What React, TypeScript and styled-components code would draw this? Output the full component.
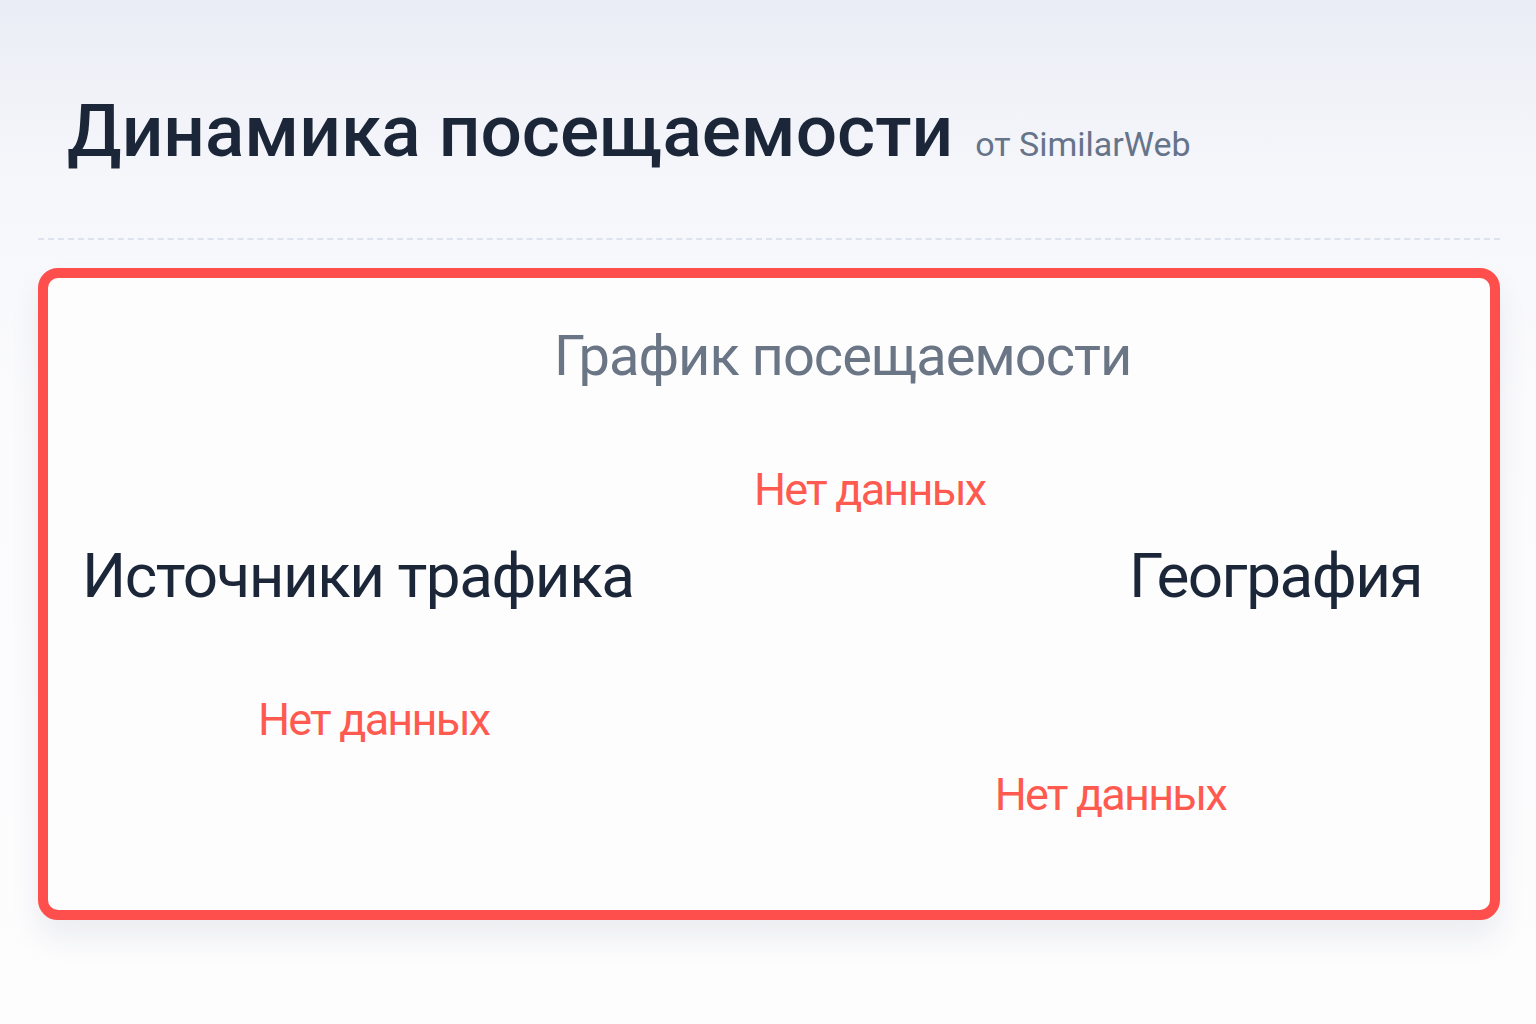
import React from "react";
import styled, { createGlobalStyle } from "styled-components";

const GlobalStyle = createGlobalStyle`
  html, body {
    margin: 0;
    padding: 0;
  }
  body {
    font-family: Roboto, "Noto Sans", "Liberation Sans", sans-serif;
    background: linear-gradient(180deg, #eaedf5 0%, #f6f7fb 18%, #fbfbfd 40%, #fdfdfe 100%);
    min-height: 1024px;
  }
`;

const Page = styled.div`
  width: 1536px;
  height: 1024px;
  box-sizing: border-box;
  padding: 95px 36px 0 38px;
  display: flex;
  flex-direction: column;
`;

const Header = styled.div`
  display: flex;
  align-items: baseline;
  gap: 22px;
  padding-left: 29px;
`;

const Title = styled.h1`
  margin: 0;
  font-size: 73px;
  font-weight: 500;
  line-height: 1;
  color: #1b2638;
`;

const Source = styled.span`
  font-size: 34px;
  color: #66748a;
`;

const Divider = styled.hr`
  margin: 70px 0 28px;
  border: none;
  border-top: 2px dashed #dde2ee;
  height: 0;
`;

const Card = styled.section`
  height: 652px;
  box-sizing: border-box;
  border: 10px solid #ff4f4c;
  border-radius: 20px;
  background: #fdfdfe;
  box-shadow: 0 18px 30px rgba(40, 50, 80, 0.08);
  display: flex;
  flex-direction: column;
`;

const ChartBlock = styled.div`
  display: flex;
  flex-direction: column;
  padding: 50px 0 0 506px;
`;

const ChartTitle = styled.h2`
  margin: 0;
  font-size: 56px;
  font-weight: 400;
  line-height: 1;
  letter-spacing: -1px;
  color: #6a7685;
`;

const Empty = styled.span<{ $left?: number; $right?: number }>`
  display: block;
  margin-left: ${(p) => p.$left ?? 0}px;
  margin-right: ${(p) => p.$right ?? 0}px;
  font-size: 45px;
  line-height: 1;
  letter-spacing: -1.8px;
  color: #ff5a4f;
`;

const Columns = styled.div`
  display: flex;
  justify-content: space-between;
  padding: 0 68px 0 34px;
`;

const Column = styled.div<{ $align: "start" | "end" }>`
  display: flex;
  flex-direction: column;
  align-items: ${(p) => (p.$align === "end" ? "flex-end" : "flex-start")};
`;

const SectionTitle = styled.h3`
  margin: 0;
  font-size: 62px;
  font-weight: 400;
  line-height: 1;
  letter-spacing: -1.5px;
  color: #1b2638;
`;

const Gap = styled.div<{ $h: number }>`
  height: ${(p) => p.$h}px;
`;

export default function App() {
  return (
    <>
      <GlobalStyle />
      <Page>
        <Header>
          <Title>Динамика посещаемости</Title>
          <Source>от SimilarWeb</Source>
        </Header>
        <Divider />
        <Card>
          <ChartBlock>
            <ChartTitle>График посещаемости</ChartTitle>
            <Gap $h={83} />
            <Empty $left={200}>Нет данных</Empty>
          </ChartBlock>
          <Gap $h={33} />
          <Columns>
            <Column $align="start">
              <SectionTitle>Источники трафика</SectionTitle>
              <Gap $h={90} />
              <Empty $left={176}>Нет данных</Empty>
            </Column>
            <Column $align="end">
              <SectionTitle>География</SectionTitle>
              <Gap $h={165} />
              <Empty $right={196}>Нет данных</Empty>
            </Column>
          </Columns>
        </Card>
      </Page>
    </>
  );
}
